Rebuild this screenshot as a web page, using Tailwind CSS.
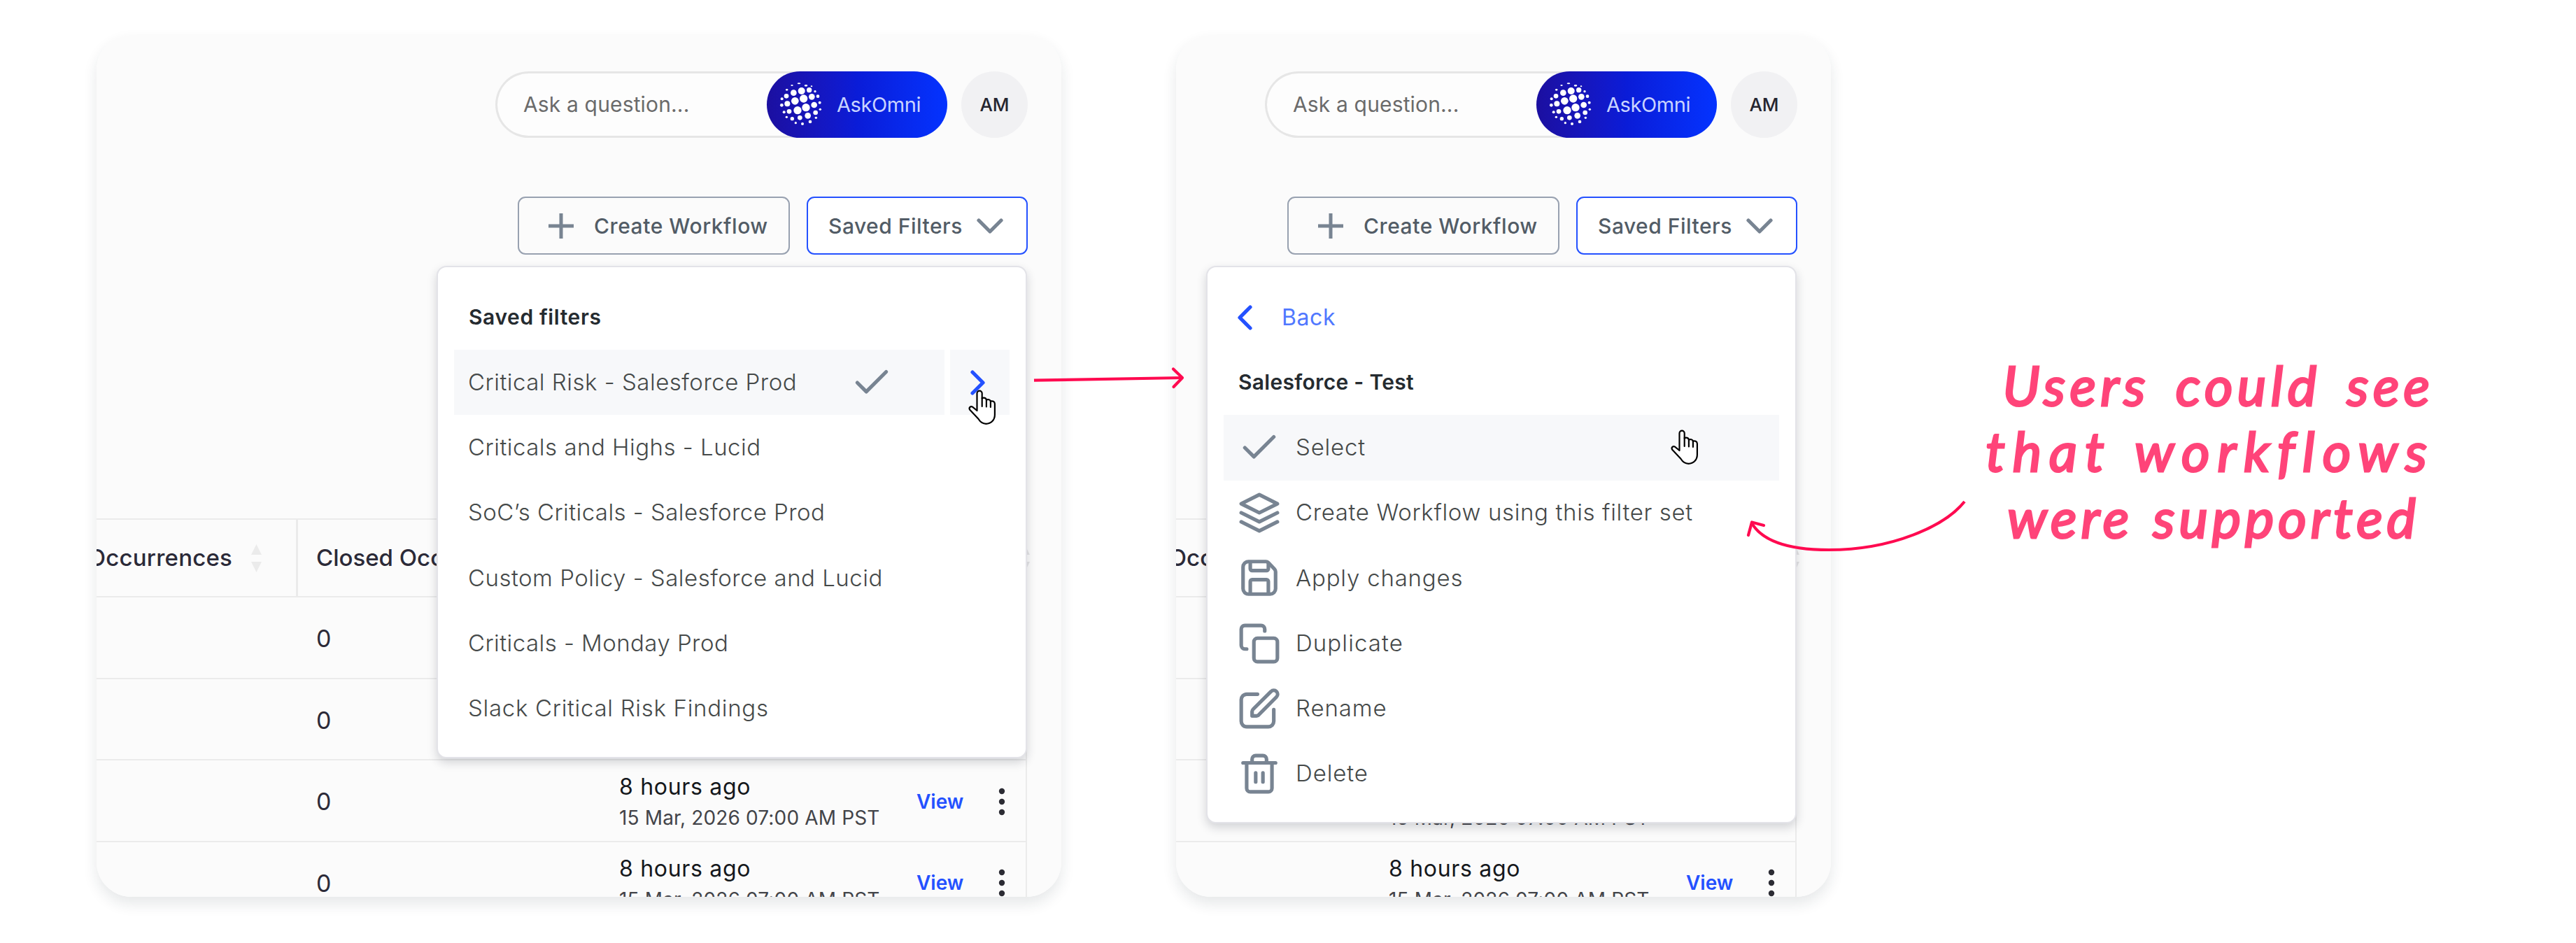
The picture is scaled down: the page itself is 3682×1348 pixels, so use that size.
<!DOCTYPE html>
<html lang="en">

<head>
    <meta charset="UTF-8">
    <meta name="viewport" content="width=device-width, initial-scale=1.0">
    <title>Saved Filters</title>
    <script src="https://cdn.jsdelivr.net/npm/@tailwindcss/browser@4"></script>
</head>

<body class="bg-white font-[Inter,sans-serif]">
    <main class="relative flex items-start w-[3682px] h-[1348px] pt-[50px] pl-[138px] overflow-hidden">

        <!-- Panel 1: list of saved filters -->
        <section class="relative shrink-0 w-[1379px] h-[1232px] rounded-[50px] shadow-[0_10px_20px_rgba(30,41,59,0.11)]">
            <div class="page flex justify-end w-full h-full overflow-hidden rounded-[50px] bg-[#fbfbfb]"></div>

            <div class="absolute top-[330px] right-[49px] w-[844px] h-[704px] pt-[25px] px-[23px] bg-white border-2 border-[#e3e3e8] rounded-[14px] shadow-[0_6px_14px_rgba(30,35,50,0.18)] text-[33px] font-[350] text-[#454949]">
                <h2 class="flex items-center h-[93.2px] pl-[21px] text-[30px] font-semibold text-[#252b30] tracking-[0.6px]">Saved filters</h2>
                <div class="flex gap-[8px] h-[93.2px]">
                    <div class="flex items-center justify-between w-[701px] pl-[20px] pr-[73px] bg-[#f7f8fa] tracking-[0.5px]">
                        <span>Critical Risk - Salesforce Prod</span>
                        <svg class="size-[62px] text-[#788492]" viewBox="0 0 24 24" fill="none" stroke="currentColor" stroke-width="2" stroke-linecap="round" stroke-linejoin="round"><path d="M20 6 9 17l-5-5" /></svg>
                    </div>
                    <div class="flex items-center grow pl-[29px] bg-[#f7f8fa]">
                        <svg class="w-[21px] h-[36px] text-[#2451ff]" viewBox="0 0 21 36" fill="none" stroke="currentColor" stroke-width="5.2" stroke-linecap="round" stroke-linejoin="round"><path d="m3 3 15 15L3 33" /></svg>
                    </div>
                </div>
                <div class="flex items-center h-[93.2px] pl-[20px] tracking-[0.5px]">Criticals and Highs - Lucid</div>
                <div class="flex items-center h-[93.2px] pl-[20px] tracking-[0.45px]">SoC’s Criticals - Salesforce Prod</div>
                <div class="flex items-center h-[93.2px] pl-[20px] tracking-[0.5px]">Custom Policy - Salesforce and Lucid</div>
                <div class="flex items-center h-[93.2px] pl-[20px] tracking-[0.45px]">Criticals - Monday Prod</div>
                <div class="flex items-center h-[93.2px] pl-[20px] tracking-[0.7px]">Slack Critical Risk Findings</div>
            </div>
        </section>

        <!-- Panel 2: actions of one filter -->
        <section class="relative shrink-0 w-[936px] h-[1232px] ml-[164px] rounded-[50px] shadow-[0_10px_20px_rgba(30,41,59,0.11)]">
            <div class="page flex justify-end w-full h-full overflow-hidden rounded-[50px] bg-[#fbfbfb]"></div>

            <div class="absolute top-[330px] right-[49px] w-[844px] h-[797px] pt-[25px] px-[23px] bg-white border-2 border-[#e3e3e8] rounded-[14px] shadow-[0_6px_14px_rgba(30,35,50,0.18)] text-[33px] font-[350] text-[#454949]">
                <div class="flex items-center gap-[42px] h-[93.2px] pl-[20px] text-[32px] font-normal text-[#5078ff] tracking-[0.6px]">
                    <svg class="w-[21px] h-[36px] text-[#2451ff]" viewBox="0 0 21 36" fill="none" stroke="currentColor" stroke-width="5.2" stroke-linecap="round" stroke-linejoin="round"><path d="M18 3 3 18l15 15" /></svg>
                    <span>Back</span>
                </div>
                <h2 class="flex items-center h-[93.2px] pl-[21px] text-[30px] font-semibold text-[#252b30] tracking-[0.3px]">Salesforce - Test</h2>
                <div class="flex items-center gap-[21px] h-[93.2px] pl-[20px] bg-[#f7f8fa] tracking-[0.8px]">
                    <svg class="size-[62px] text-[#788492]" viewBox="0 0 24 24" fill="none" stroke="currentColor" stroke-width="2" stroke-linecap="round" stroke-linejoin="round"><path d="M20 6 9 17l-5-5" /></svg>
                    <span>Select</span>
                </div>
                <div class="flex items-center gap-[21px] h-[93.2px] pl-[20px] tracking-[0.65px]">
                    <svg class="size-[62px] text-[#788492]" viewBox="0 0 24 24" fill="none" stroke="currentColor" stroke-width="2" stroke-linecap="round" stroke-linejoin="round"><path d="M12 2 2 7l10 5 10-5zM2 17l10 5 10-5M2 12l10 5 10-5" /></svg>
                    <span>Create Workflow using this filter set</span>
                </div>
                <div class="flex items-center gap-[21px] h-[93.2px] pl-[20px] tracking-[0.8px]">
                    <svg class="size-[62px] text-[#788492]" viewBox="0 0 24 24" fill="none" stroke="currentColor" stroke-width="2" stroke-linecap="round" stroke-linejoin="round"><path d="M6 21a3 3 0 0 1-3-3V6a3 3 0 0 1 3-3h9.6a2 2 0 0 1 1.4.6l3.4 3.6a2 2 0 0 1 .6 1.4V18a3 3 0 0 1-3 3z" /><path d="M7 3.5V7a1 1 0 0 0 1 1h8a1 1 0 0 0 1-1V4M7 20.5V14a1 1 0 0 1 1-1h8a1 1 0 0 1 1 1v6.5" /></svg>
                    <span>Apply changes</span>
                </div>
                <div class="flex items-center gap-[21px] h-[93.2px] pl-[20px] tracking-[1.1px]">
                    <svg class="size-[62px] text-[#788492]" viewBox="0 0 24 24" fill="none" stroke="currentColor" stroke-width="2" stroke-linecap="round" stroke-linejoin="round"><rect x="9" y="9" width="13" height="13" rx="2" /><path d="M5 15H4a2 2 0 0 1-2-2V4a2 2 0 0 1 2-2h9a2 2 0 0 1 2 2v1" /></svg>
                    <span>Duplicate</span>
                </div>
                <div class="flex items-center gap-[21px] h-[93.2px] pl-[20px] tracking-[0.9px]">
                    <svg class="size-[62px] text-[#788492]" viewBox="0 0 24 24" fill="none" stroke="currentColor" stroke-width="2" stroke-linecap="round" stroke-linejoin="round"><path d="M11 4H5a3 3 0 0 0-3 3v12a3 3 0 0 0 3 3h12a3 3 0 0 0 3-3v-6.5" /><path d="M18.5 2.5a2.12 2.12 0 0 1 3 3l-9.6 9.7c-.4.5-.8.8-1.4.8H8v-2.5c0-.6.4-1 .8-1.4z" /></svg>
                    <span>Rename</span>
                </div>
                <div class="flex items-center gap-[21px] h-[93.2px] pl-[20px] tracking-[0.9px]">
                    <svg class="size-[62px] text-[#788492]" viewBox="0 0 24 24" fill="none" stroke="currentColor" stroke-width="2" stroke-linecap="round" stroke-linejoin="round"><path d="M3 6h18M19 6v14a2 2 0 0 1-2 2H7a2 2 0 0 1-2-2V6M8 6V4a2 2 0 0 1 2-2h4a2 2 0 0 1 2 2v2M10 11.5v5M14 11.5v5" /></svg>
                    <span>Delete</span>
                </div>
            </div>
        </section>

        <!-- Handwritten note -->
        <p class="flex flex-col items-center w-[660px] ml-[212px] mt-[453px] font-[Lato,sans-serif] italic font-normal text-[78px] leading-[94.3px] text-[#ff4479] [-webkit-text-stroke:3px_#ff4479] [stroke-linejoin:round] whitespace-nowrap">
            <span class="tracking-[6.5px] word-spacing-normal [word-spacing:12px] ml-[24px]">Users could see</span>
            <span class="tracking-[11px] [word-spacing:4px]">that workflows</span>
            <span class="tracking-[6px] [word-spacing:4px] ml-[10px]">were supported</span>
        </p>

        <!-- Arrows and mouse pointers over the panels -->
        <svg class="absolute inset-0 w-[3682px] h-[1348px]" viewBox="0 0 3682 1348" fill="none">
            <g stroke="#ff0a50" stroke-width="4.2" stroke-linejoin="round">
                <path d="M1478 543.7 1690 540" />
                <path d="M1677 527.5 1690 540 1677.5 553" stroke-linecap="round" />
                <path d="M2808 717C2780 752 2705 786 2614 786c-54 0-94-11-110-38" />
                <path d="M2499 765 2504 746.5 2521 751" stroke-linecap="round" />
            </g>
            <g id="pointer" transform="translate(1384 557)" stroke="#000" stroke-width="2.2" stroke-linejoin="round" stroke-linecap="round">
                <path fill="#fff" d="M12.5 30V5.3a3.6 3.6 0 0 1 7.2 0v7.2c2-1.5 6-.8 6.2 2.2 2-1.3 5.6-.4 6 2 2.4-1 6 0 6 3.5V36c0 7-5 12.8-12.5 12.8-5 0-8-2-11-7L2 28.5c-1.500-3 1.5-5.5 4-3.8z" />
                <path d="M19.7 12v12M25.9 14.7v9.8M31.9 16.7V25" />
            </g>
            <use href="#pointer" x="1004" y="57" />
        </svg>
    </main>

    <!-- Page behind the menus, used in both panels -->
    <template id="page">
        <div class="shrink-0 w-[1379px] pt-[52px]">
            <div class="flex items-center justify-end gap-[20px] pr-[48px] text-[30px]">
                <div class="flex items-center justify-between w-[646px] h-[95px] pl-[40px] rounded-full bg-[#fdfdfd] shadow-[inset_0_0_0_3px_#e6e6e6] text-[#6b6b6b] tracking-[0.15px]">
                    <span>Ask a question...</span>
                    <div class="flex items-center gap-[18px] w-[258px] h-[95px] pl-[17px] rounded-full bg-linear-to-r from-[#1b0fa0] via-[#0a1cd8] to-[#0433ff] text-[#c9d3ff] text-[29px] tracking-[-0.4px]">
                        <svg class="size-[65px]" viewBox="70 58 195 195" fill="#fff">
                            <ellipse cx="127" cy="73" rx="5" ry="3" /><ellipse cx="157" cy="65" rx="7" ry="3" /><ellipse cx="187" cy="74" rx="7" ry="4" /><ellipse cx="211" cy="77" rx="4" ry="3" /><ellipse cx="105" cy="92" rx="5" ry="4" />
                            <circle cx="134" cy="105" r="13" /><circle cx="168" cy="97" r="15" /><circle cx="201" cy="93" r="11" /><circle cx="103" cy="119" r="10" /><circle cx="226" cy="99" r="5" /><circle cx="84" cy="131" r="6" />
                            <circle cx="140" cy="140" r="16" /><circle cx="177" cy="130" r="17" /><circle cx="212" cy="122" r="13" /><circle cx="107" cy="152" r="12" /><circle cx="238" cy="120" r="7" /><circle cx="83" cy="158" r="7" />
                            <circle cx="151" cy="180" r="17" /><circle cx="187" cy="168" r="17" /><circle cx="222" cy="157" r="13" /><circle cx="115" cy="185" r="10" /><circle cx="246" cy="147" r="6" /><circle cx="93" cy="188" r="6" />
                            <circle cx="195" cy="203" r="13" /><circle cx="228" cy="190" r="10" /><circle cx="161" cy="212" r="10" /><circle cx="128" cy="216" r="8" /><circle cx="248" cy="176" r="5" /><circle cx="104" cy="209" r="5" />
                            <circle cx="172" cy="238" r="6" /><circle cx="205" cy="229" r="7" /><circle cx="230" cy="212" r="5" /><circle cx="143" cy="234" r="5" />
                        </svg>
                        <span>AskOmni</span>
                    </div>
                </div>
                <div class="flex items-center justify-center size-[95px] rounded-full bg-[#f1f1f3] text-[26px] font-medium text-[#25252f]">AM</div>
            </div>
            <div class="flex justify-end gap-[24px] mt-[84px] pr-[48px] text-[30px] font-medium text-[#525c66]">
                <div class="flex items-center gap-[29px] w-[389px] h-[83px] pl-[42px] pt-px border-[2.5px] border-[#98a1b0] rounded-[11px] whitespace-nowrap tracking-[0.55px]">
                    <svg class="shrink-0 size-[36px] text-[#788492]" viewBox="0 0 36 36" fill="none" stroke="currentColor" stroke-width="5"><path d="M18 0v36M0 18h36" /></svg>
                    <span>Create Workflow</span>
                </div>
                <div class="flex items-center justify-between w-[316px] h-[83px] pl-[29px] pr-[33px] pt-px bg-white border-[2.5px] border-[#2451ff] rounded-[11px] tracking-[0.5px]">
                    <span>Saved Filters</span>
                    <svg class="w-[38px] h-[22px] text-[#788492]" viewBox="0 0 38 22" fill="none" stroke="currentColor" stroke-width="5.2" stroke-linecap="round" stroke-linejoin="round"><path d="m3 3 16 16L35 3" /></svg>
                </div>
            </div>
            <div class="w-[1330px] mt-[377px] border-r-2 border-[#ebebeb] text-[#2b2a38]">
                <div class="flex h-[111.2px] border-t-2 border-[#ebebeb] text-[33px] font-medium">
                    <div class="flex items-center justify-end gap-[27px] w-[288px] pr-[49px] border-r-3 border-[#ebebeb] tracking-[0.2px]">
                        <span>Occurrences</span>
                        <svg class="shrink-0 w-[15px] h-[40px]" viewBox="0 0 15 40" fill="#ebebeb"><path d="M7.5 0 15 15H0zM0 25h15L7.5 40z" /></svg>
                    </div>
                    <div class="flex items-center grow pl-[26px]">Closed Occurrences</div>
                    <svg class="shrink-0 self-center w-[15px] h-[40px] mr-[-6px]" viewBox="0 0 15 40" fill="#e4e4e6"><path d="M7.5 0 15 15H0zM0 25h15L7.5 40z" /></svg>
                </div>
                <div class="flex items-center h-[116.6px] pt-[2px] pl-[314px] border-t-2 border-[#ebebeb] text-[34px]">0</div>
                <div class="flex items-center h-[116.6px] pt-[2px] pl-[314px] border-t-2 border-[#ebebeb] text-[34px]">0</div>
                <div class="flex items-center h-[116.6px] pt-[2px] pl-[314px] border-t-2 border-[#ebebeb]">
                    <span class="w-[433px] text-[34px]">0</span>
                    <div class="w-[425px] pt-[3px] text-[32px] leading-[43px] text-[#15181c] tracking-[0.7px]">8 hours ago<br><span class="text-[28px] text-[#434449] tracking-[0.15px]">15 Mar, 2026 07:00 AM PST</span></div>
                    <span class="w-[117px] text-[28px] font-semibold text-[#2451ff]">View</span>
                    <svg class="w-[10px] h-[40px]" viewBox="0 0 10 40" fill="#2c2c34"><circle cx="5" cy="5" r="4.2" /><circle cx="5" cy="20" r="4.2" /><circle cx="5" cy="35" r="4.2" /></svg>
                </div>
                <div class="flex items-center h-[116.6px] pt-[2px] pl-[314px] border-t-2 border-[#ebebeb]">
                    <span class="w-[433px] text-[34px]">0</span>
                    <div class="w-[425px] pt-[3px] text-[32px] leading-[43px] text-[#15181c] tracking-[0.7px]">8 hours ago<br><span class="text-[28px] text-[#434449] tracking-[0.15px]">15 Mar, 2026 07:00 AM PST</span></div>
                    <span class="w-[117px] text-[28px] font-semibold text-[#2451ff]">View</span>
                    <svg class="w-[10px] h-[40px]" viewBox="0 0 10 40" fill="#2c2c34"><circle cx="5" cy="5" r="4.2" /><circle cx="5" cy="20" r="4.2" /><circle cx="5" cy="35" r="4.2" /></svg>
                </div>
            </div>
        </div>
    </template>

    <script>
        // Put a copy of the page behind each menu
        const page = document.getElementById('page');
        document.querySelectorAll('.page').forEach(el => {
            el.appendChild(page.content.cloneNode(true));
        });
    </script>
</body>

</html>
